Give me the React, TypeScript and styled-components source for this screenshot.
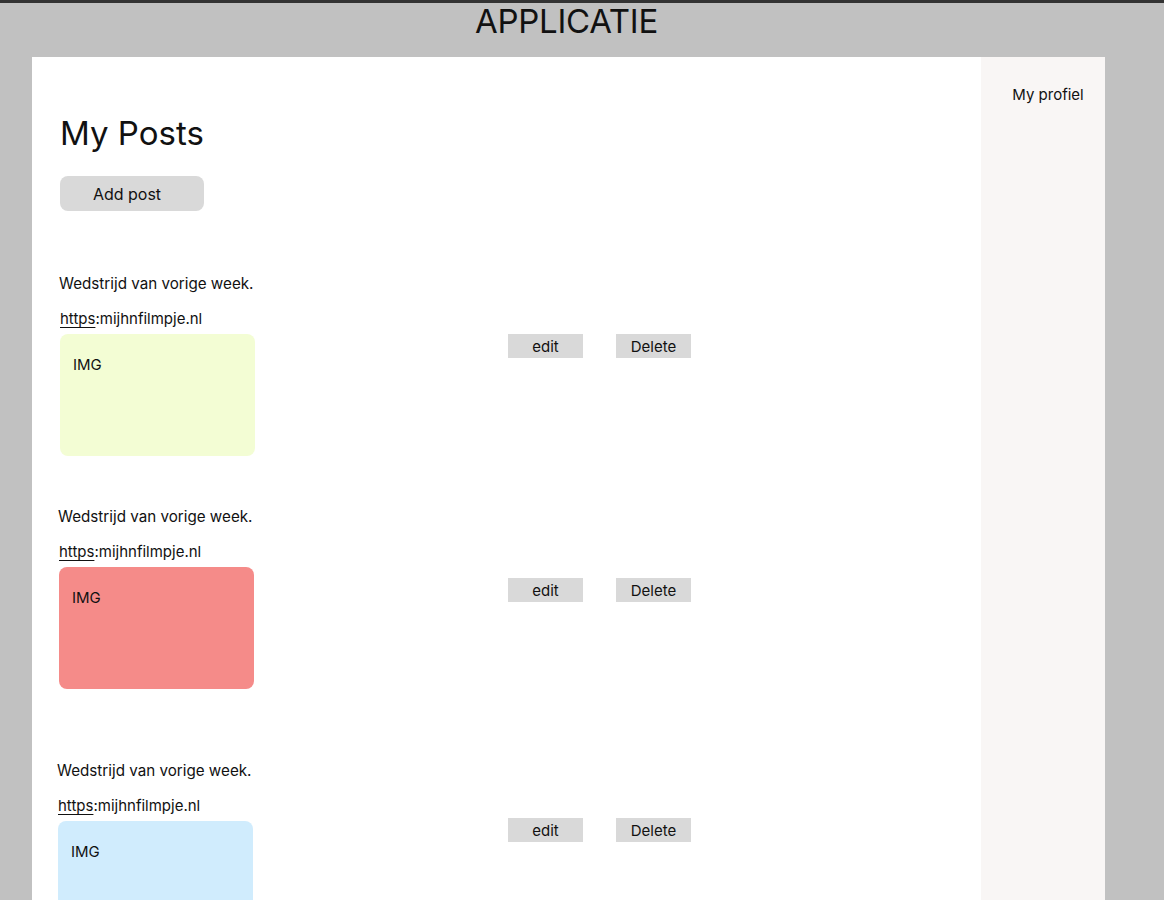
import React from "react";
import styled, { createGlobalStyle } from "styled-components";

const Global = createGlobalStyle`
  html, body { margin: 0; padding: 0; }
  body {
    background: #c1c1c1;
    font-family: Inter, "Noto Sans", sans-serif;
    color: #111;
    border-top: 3px solid #333;
    height: 897px;
    overflow: hidden;
  }
`;

const Frame = styled.div`
  width: 1073px;
  margin-left: 32px;
  display: flex;
  flex-direction: column;
`;

const Header = styled.header`
  height: 54px;
  display: flex;
  justify-content: center;
`;

const AppTitle = styled.h1`
  margin: 0;
  font-size: 33px;
  font-weight: 400;
  line-height: 36px;
  letter-spacing: -0.3px;
  transform: translateX(-2px);
`;

const Panel = styled.div`
  display: grid;
  grid-template-columns: 949px 124px;
  height: 843px;
`;

const Main = styled.main`
  background: #fff;
  padding: 56px 0 0 28px;
`;

const Side = styled.aside`
  background: #f9f6f5;
  padding-top: 28px;
  display: flex;
  justify-content: center;
`;

const SideLink = styled.div`
  font-size: 15px;
  line-height: 20px;
  margin-left: 10px;
`;

const PageTitle = styled.h2`
  margin: 0;
  font-size: 33px;
  font-weight: 400;
  line-height: 40px;
`;

const AddButton = styled.button`
  margin-top: 23px;
  width: 144px;
  height: 35px;
  border: none;
  border-radius: 8px;
  background: #d9d9d9;
  font-family: inherit;
  font-size: 16px;
  color: #111;
  padding: 0 10px 0 0;
`;

const Posts = styled.div`
  display: flex;
  flex-direction: column;
`;

const PostRow = styled.section<{ $top: number }>`
  display: flex;
  margin-top: ${(p) => p.$top}px;
`;

const PostInfo = styled.div<{ $shift: number }>`
  width: 448px;
  margin-left: ${(p) => p.$shift}px;
  margin-right: ${(p) => -p.$shift}px;
  display: flex;
  flex-direction: column;
`;

const PostTitle = styled.div`
  font-size: 15.2px;
  line-height: 20px;
  margin-left: -1px;
`;

const PostLink = styled.div`
  margin-top: 15px;
  font-size: 15px;
  line-height: 20px;
`;

const Scheme = styled.span`
  text-decoration: underline;
  text-underline-offset: 3px;
  text-decoration-thickness: 1px;
`;

const ImageBox = styled.div<{ $bg: string }>`
  margin-top: 5px;
  width: 195px;
  height: 122px;
  border-radius: 8px;
  background: ${(p) => p.$bg};
  padding: 21px 0 0 13px;
  box-sizing: border-box;
  font-size: 15px;
  line-height: 20px;
`;

const Actions = styled.div<{ $top: number }>`
  display: flex;
  gap: 33px;
  align-self: flex-start;
  margin-top: ${(p) => p.$top}px;
`;

const SmallButton = styled.button`
  width: 75px;
  height: 24px;
  border: none;
  border-radius: 0;
  background: #d9d9d9;
  font-family: inherit;
  font-size: 15px;
  color: #111;
  padding: 0;
`;

const posts = [
  { color: "#f3fdd4", top: 63, shift: 0, action: 60 },
  { color: "#f58b89", top: 51, shift: -1, action: 71 },
  { color: "#d0ecfd", top: 72, shift: -2, action: 57 },
];

export default function App() {
  return (
    <>
      <Global />
      <Frame>
        <Header>
          <AppTitle>APPLICATIE</AppTitle>
        </Header>
        <Panel>
          <Main>
            <PageTitle>My Posts</PageTitle>
            <AddButton>Add post</AddButton>
            <Posts>
              {posts.map((p, i) => (
                <PostRow key={i} $top={p.top}>
                  <PostInfo $shift={p.shift}>
                    <PostTitle>Wedstrijd van vorige week.</PostTitle>
                    <PostLink>
                      <Scheme>https</Scheme>:mijhnfilmpje.nl
                    </PostLink>
                    <ImageBox $bg={p.color}>IMG</ImageBox>
                  </PostInfo>
                  <Actions $top={p.action}>
                    <SmallButton>edit</SmallButton>
                    <SmallButton>Delete</SmallButton>
                  </Actions>
                </PostRow>
              ))}
            </Posts>
          </Main>
          <Side>
            <SideLink>My profiel</SideLink>
          </Side>
        </Panel>
      </Frame>
    </>
  );
}
